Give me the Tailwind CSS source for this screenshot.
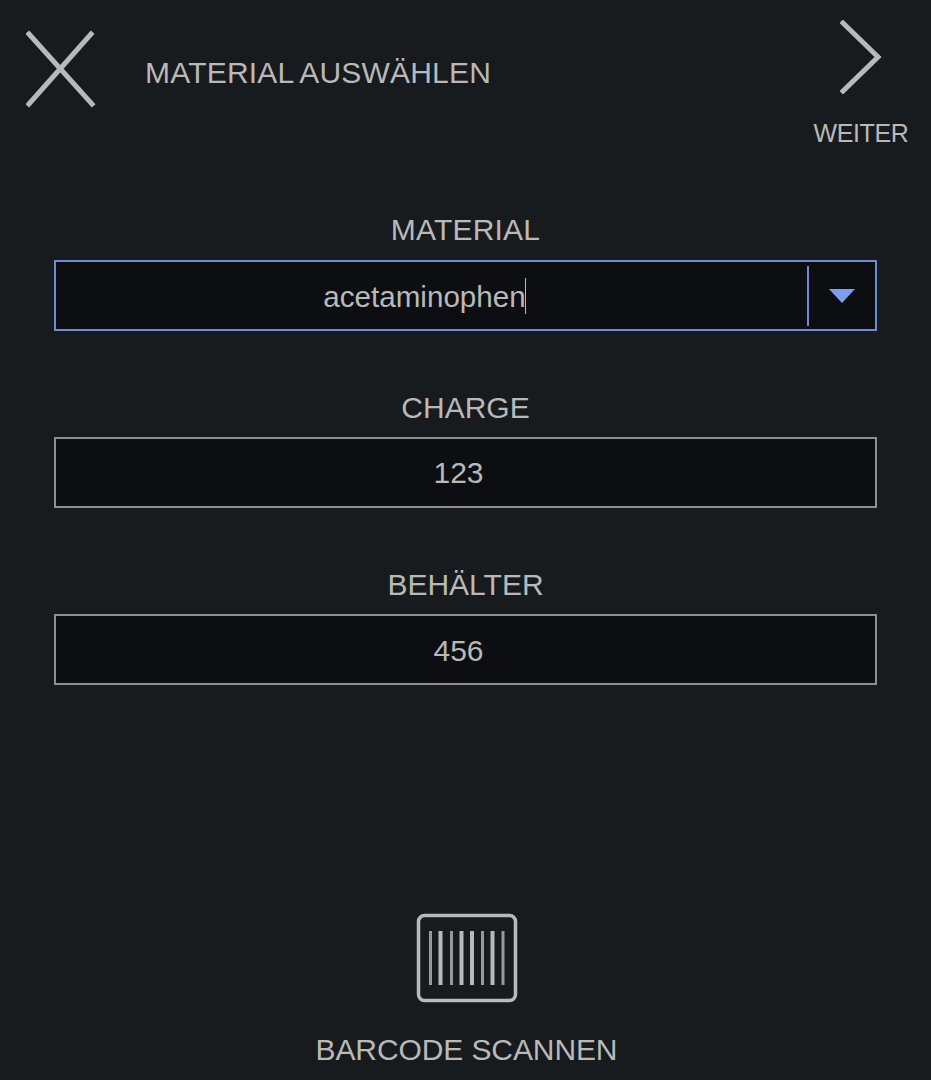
<!DOCTYPE html>
<html lang="de">
<head>
    <meta charset="UTF-8">
    <meta name="viewport" content="width=device-width, initial-scale=1.0">
    <title>Material auswählen</title>
    <script src="https://cdn.jsdelivr.net/npm/@tailwindcss/browser@4"></script>
</head>
<body class="bg-[#181b1e] text-[#b9b9b9] font-['Liberation_Sans',Arial,sans-serif]">
<div class="w-[931px] h-[1080px] overflow-hidden flex flex-col">

    <!-- Kopfzeile -->
    <header class="h-[212px] flex items-start">
        <button class="ml-[26px] mt-[30px] w-[70px] h-[78px] shrink-0">
            <svg width="70" height="78" viewBox="0 0 70 78" fill="none" stroke="#b9b9b9" stroke-width="5" stroke-linecap="square"><path d="M3 4 L66 74"/><path d="M65 4 L3 74"/></svg>
        </button>
        <h1 class="ml-[49px] mt-[56px] text-[30px] leading-[34px] tracking-[0.2px] [word-spacing:-1px] whitespace-nowrap">MATERIAL AUSWÄHLEN</h1>
        <button class="ml-auto mr-[23px] mt-[20px] w-[94px] flex flex-col items-center">
            <svg class="-ml-[1px]" width="42" height="74" viewBox="0 0 42 74" fill="none" stroke="#b9b9b9" stroke-width="5" stroke-linecap="square" stroke-linejoin="miter"><path d="M3 3 L38 37 L3 71"/></svg>
            <span class="mt-[25px] text-[25px] leading-[29px] tracking-[-0.4px]">WEITER</span>
        </button>
    </header>

    <!-- Formular -->
    <main class="px-[54px] w-[931px] flex flex-col gap-[58px]">
        <div class="flex flex-col items-center">
            <label class="text-[30px] leading-[36px] tracking-[0.2px] mb-[12px]">MATERIAL</label>
            <div class="relative w-[823px] h-[71px] bg-[#0c0e11] border-2 border-[#6f8bd4] flex items-center">
                <span class="flex-1 text-center text-[29.6px] leading-[36px] pr-[14px] pt-[6px]">acetaminophen<span class="inline-block w-[1px] h-[36px] bg-[#b9b9b9] align-middle -ml-[1px] -translate-y-[4px]"></span></span>
                <span class="w-[2px] h-[60px] bg-[#6f8bd4]"></span>
                <span class="w-[66px] flex justify-center">
                    <svg width="26" height="14" viewBox="0 0 26 14"><path d="M0 0 H26 L13 14 Z" fill="#7f9df0"/></svg>
                </span>
            </div>
        </div>
        <div class="flex flex-col items-center">
            <label class="text-[30px] leading-[36px] pt-[1px] mb-[11px] box-content">CHARGE</label>
            <div class="w-[823px] h-[71px] bg-[#0c0e11] border-2 border-[#8f8f8f] flex items-center justify-center pr-[14px] text-[30px]">123</div>
        </div>
        <div class="flex flex-col items-center">
            <label class="text-[30px] leading-[36px] pt-[1px] mb-[11px] box-content">BEHÄLTER</label>
            <div class="w-[823px] h-[71px] bg-[#0c0e11] border-2 border-[#8f8f8f] flex items-center justify-center pr-[14px] pt-[2px] text-[30px]">456</div>
        </div>
    </main>

    <!-- Barcode -->
    <footer class="mt-[228px] flex flex-col items-center">
        <svg class="mr-[-3px]" width="102" height="90" viewBox="0 0 102 90" fill="none" stroke="#b9b9b9" stroke-linecap="butt">
            <rect x="2.5" y="2.5" width="97" height="85" rx="6" stroke-width="3.5"/>
            <path d="M14.5 18 V72" stroke-width="3" stroke-opacity="0.8"/>
            <path d="M24.5 18 V72" stroke-width="4"/>
            <path d="M35.5 18 V72" stroke-width="3" stroke-opacity="0.8"/>
            <path d="M45.5 18 V72" stroke-width="4"/>
            <path d="M56 18 V72" stroke-width="4"/>
            <path d="M66.5 18 V72" stroke-width="3" stroke-opacity="0.8"/>
            <path d="M76.5 18 V72" stroke-width="4"/>
            <path d="M87 18 V72" stroke-width="3" stroke-opacity="0.8"/>
        </svg>
        <span class="mt-[29px] ml-[2px] text-[30px] leading-[36px] tracking-[-0.1px]">BARCODE SCANNEN</span>
    </footer>
</div>
</body>
</html>
